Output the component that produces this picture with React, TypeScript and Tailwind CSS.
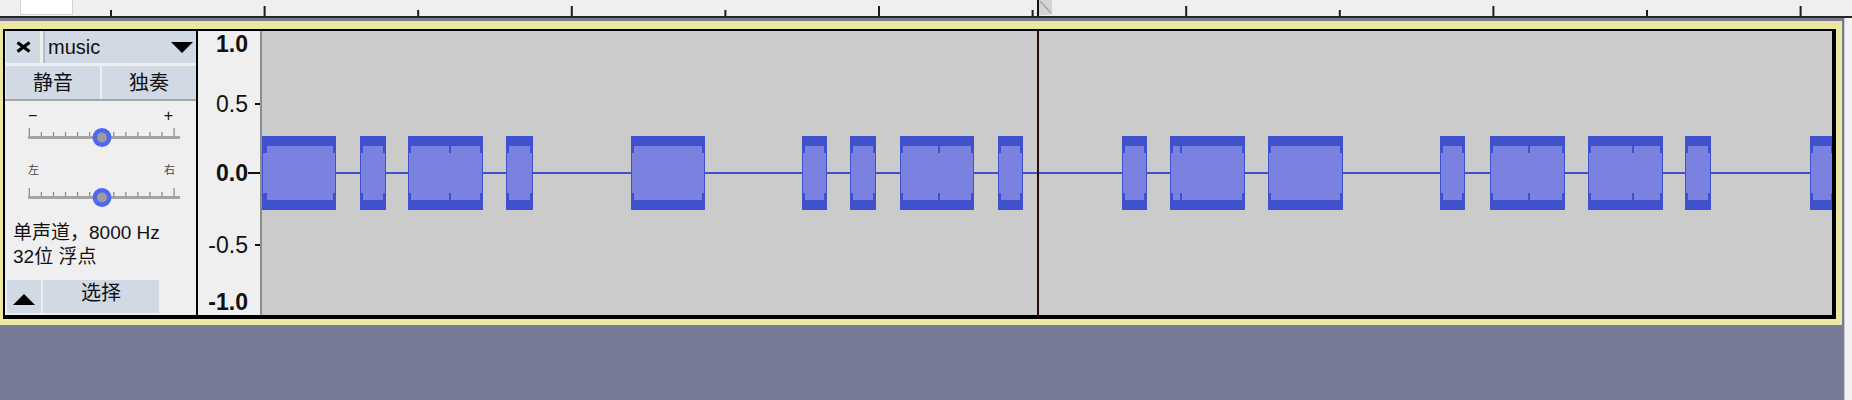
import React from 'react'

const FONT = "font-['Liberation_Sans','Noto_Sans_CJK_SC',sans-serif]"

const DARK = '#4051cd'
const LIGHT = '#7a81de'
const WAVE_LEFT = 262

// morse-ish blocks, absolute x in page px
const blocks: { x0: number; x1: number; seams?: number[]; wideLeft?: boolean }[] = [
  { x0: 262, x1: 336, wideLeft: true },
  { x0: 360, x1: 386 },
  { x0: 408, x1: 483, seams: [449] },
  { x0: 506, x1: 533 },
  { x0: 631, x1: 705 },
  { x0: 802, x1: 827 },
  { x0: 850, x1: 876 },
  { x0: 900, x1: 974, seams: [938] },
  { x0: 998, x1: 1023 },
  { x0: 1122, x1: 1147 },
  { x0: 1170, x1: 1245, seams: [1180] },
  { x0: 1268, x1: 1343 },
  { x0: 1440, x1: 1465 },
  { x0: 1490, x1: 1565, seams: [1528] },
  { x0: 1588, x1: 1663, seams: [1632] },
  { x0: 1685, x1: 1711 },
  { x0: 1810, x1: 1834 },
]

function Ruler() {
  const ticks = Array.from({ length: 12 }, (_, i) => 111 + i * 153.6)
  return (
    <div className="relative flex h-[16px] shrink-0 bg-[#efefef]">
      <div className="ml-[20px] h-[15px] w-[53px] border-r border-b border-l border-[#d2d2d2] bg-white" />
      <svg className="absolute inset-0" width="1852" height="16">
        {ticks.map((x, i) => (
          <rect key={i} x={x - 1} y={i % 2 ? 6 : 10} width="2" height={i % 2 ? 10 : 6} fill="#1c1c1c" />
        ))}
        <rect x="1039" y="0" width="13" height="15" fill="#d4d4d4" />
        <line x1="1040" y1="1" x2="1051" y2="13" stroke="#a8a8a8" strokeWidth="1.5" />
        <rect x="1037" y="0" width="2" height="16" fill="#111" />
      </svg>
    </div>
  )
}

function Slider() {
  const ticks = Array.from({ length: 13 }, (_, i) => 24.3 + i * 12.06)
  return (
    <svg width="191" height="24" className="block">
      <rect x="23" y="11" width="152" height="3" fill="#a4a4a4" />
      {ticks.map((x, i) => {
        const tall = i === 0 || i === 12
        return (
          <rect key={i} x={x - 0.6} y={tall ? 3 : 7} width="1.3" height={tall ? 8 : 4} fill="#8e8e8e" />
        )
      })}
      <circle cx="97" cy="12.5" r="7.2" fill="#9c9c9c" stroke="#5068f0" strokeWidth="4.5" />
    </svg>
  )
}

function TrackPanel() {
  return (
    <div className={`flex w-[193px] shrink-0 flex-col border-r-2 border-black bg-[#efefef] text-[#111] ${FONT}`}>
      <div className="flex h-[32px] gap-[3px] pl-px">
        <button className="flex w-[34px] items-center justify-center bg-[#d1d9e5]">
          <svg width="15" height="12" viewBox="0 0 15 12">
            <path d="M1.5 1.5 L13.5 10.5 M13.5 1.5 L1.5 10.5" stroke="#000" strokeWidth="3.2" />
          </svg>
        </button>
        <div className="flex flex-1 items-center justify-between bg-[#d1d9e5] pr-[3px] pl-[5px] shadow-[inset_2px_0_0_#b9bfc8]">
          <span className="text-[20px] leading-none">music</span>
          <svg width="22" height="11" viewBox="0 0 22 11">
            <polygon points="0,0 22,0 11,11" fill="#000" />
          </svg>
        </div>
      </div>
      <div className="mt-[3px] flex h-[33px] gap-[2px] pl-px">
        <button className="w-[94px] bg-[#d1d9e5] text-[20px] leading-none">静音</button>
        <button className="flex-1 bg-[#d1d9e5] text-[20px] leading-none">独奏</button>
      </div>
      <div className="h-[2px] bg-[#a6a6a6]" />
      <div className="flex h-[24px] items-end justify-between pr-[23px] pb-[1px] pl-[23px] text-[16px] leading-none">
        <span>−</span>
        <span>+</span>
      </div>
      <Slider />
      <div className="mt-[14px] flex h-[14px] items-center justify-between pr-[21px] pl-[23px] text-[11px] leading-none text-[#444]">
        <span>左</span>
        <span>右</span>
      </div>
      <div className="mt-[8px]">
        <Slider />
      </div>
      <div className="mt-[12px] pl-[8px] text-[19px] leading-[24px]">
        <div>单声道，8000 Hz</div>
        <div>32位 浮点</div>
      </div>
      <div className="mt-[11px] flex h-[33px] gap-[2px] pl-[2px]">
        <button className="flex w-[34px] items-end justify-center bg-[#d1d9e5] pb-[8px]">
          <svg width="22" height="11" viewBox="0 0 22 11">
            <polygon points="0,11 22,11 11,0" fill="#000" />
          </svg>
        </button>
        <button className="w-[116px] bg-[#d1d9e5] pb-[7px] text-[20px] leading-none">选择</button>
      </div>
    </div>
  )
}

function AxisRow({ label, bold, tick, className }: { label: string; bold?: boolean; tick: number; className: string }) {
  return (
    <div className={`flex h-[24px] items-center justify-end ${className}`}>
      <span className={`text-[23px] leading-none ${bold ? 'font-bold' : ''}`}>{label}</span>
      <div className="flex w-[12px] justify-end">
        {tick > 0 && <div className="h-[2px] bg-[#111]" style={{ width: tick }} />}
      </div>
    </div>
  )
}

function Axis() {
  return (
    <div className={`flex w-[64px] shrink-0 flex-col border-r-2 border-[#8c8c8c] bg-[#efefef] text-[#111] ${FONT}`}>
      <AxisRow label="1.0" bold tick={0} className="mt-px" />
      <AxisRow label="0.5" tick={5} className="mt-[36px]" />
      <AxisRow label="0.0" bold tick={12} className="mt-[45px]" />
      <AxisRow label="-0.5" tick={5} className="mt-[48px]" />
      <AxisRow label="-1.0" bold tick={0} className="mt-[33px]" />
    </div>
  )
}

function Waveform() {
  return (
    <div className="relative flex-1 overflow-hidden bg-[#cbcbcb]">
      <svg width="1570" height="284" className="block">
        <rect x="0" y="141" width="1570" height="2" fill={DARK} />
        {blocks.map((b, i) => {
          const a = b.x0 - WAVE_LEFT
          const w = b.x1 - b.x0
          const lw = b.wideLeft ? 5 : 3
          return (
            <g key={i}>
              <rect x={a} y="105" width={w} height="74" fill={DARK} />
              <rect x={a + 1} y="115" width={w - 2} height="54" fill={LIGHT} />
              <rect x={a} y="115" width={lw} height="7" fill={DARK} />
              <rect x={a} y="162" width={lw} height="7" fill={DARK} />
              <rect x={a + w - 3} y="115" width="3" height="7" fill={DARK} />
              <rect x={a + w - 3} y="162" width="3" height="7" fill={DARK} />
              {(b.seams ?? []).map((s) => (
                <g key={s}>
                  <rect x={s - WAVE_LEFT} y="115" width="2" height="7" fill={DARK} />
                  <rect x={s - WAVE_LEFT} y="162" width="2" height="7" fill={DARK} />
                </g>
              ))}
            </g>
          )
        })}
      </svg>
      <div className="absolute top-0 bottom-0 left-[775px] w-[2px] bg-[#2a0b08]" />
    </div>
  )
}

export default function App() {
  return (
    <div className="flex h-[400px] w-[1852px] flex-col overflow-hidden bg-[#777b96]">
      <Ruler />
      <div className="h-[2px] shrink-0 bg-[#262626]" />
      <div className="flex flex-1">
        <div className="w-[1844px] pt-[3px]">
          <div className="w-[1842px] border-t-[8px] border-r-[6px] border-b-[6px] border-l-[3px] border-[#ece8a3]">
            <div className="flex h-[290px] border-t-2 border-r-4 border-b-4 border-l-2 border-black">
              <TrackPanel />
              <Axis />
              <Waveform />
            </div>
          </div>
        </div>
        <div className="flex-1 border-l border-[#c9c9c9] bg-[#f2f2f2]" />
      </div>
    </div>
  )
}
